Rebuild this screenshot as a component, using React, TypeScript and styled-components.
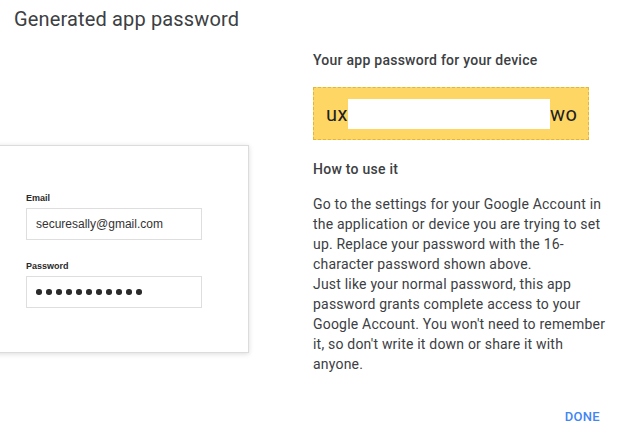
import React from "react";
import styled, { createGlobalStyle } from "styled-components";

const Global = createGlobalStyle`
  html, body { margin: 0; padding: 0; background: #fff; }
  body { font-family: Roboto, "Noto Sans", Arial, sans-serif; color: #3c4043; }
  * { box-sizing: border-box; }
`;

const Dialog = styled.div`
  width: 629px;
  height: 444px;
  display: flex;
  flex-direction: column;
  overflow: hidden;
`;

const Title = styled.h1`
  margin: 7px 0 0 14px;
  font-size: 20px;
  line-height: 24px;
  font-weight: 400;
  letter-spacing: 0.15px;
  color: #3c4043;
`;

const Body = styled.div`
  display: grid;
  grid-template-columns: 313px 300px;
  margin-top: 19px;
`;

const LeftCol = styled.div`
  padding-top: 95px;
`;

const Card = styled.div`
  margin-left: -10px;
  width: 259px;
  height: 208px;
  background: #fff;
  border: 1px solid #dcdcdc;
  box-shadow: 0 1px 5px rgba(0, 0, 0, 0.14);
  padding: 46px 0 0 35px;
  font-family: "Liberation Sans", Arial, sans-serif;
`;

const Field = styled.div<{ $gap?: number }>`
  display: flex;
  flex-direction: column;
  margin-top: ${(p) => p.$gap ?? 0}px;
`;

const Label = styled.label`
  font-size: 9px;
  line-height: 12px;
  font-weight: 700;
  color: #2a2a2a;
  margin-bottom: 4px;
`;

const Input = styled.div`
  width: 176px;
  height: 32px;
  border: 1px solid #dedede;
  display: flex;
  align-items: center;
  padding-left: 9px;
  font-size: 12px;
  color: #333;
`;

const Dots = styled.div`
  display: flex;
  gap: 4.5px;
`;

const Dot = styled.span`
  width: 5.5px;
  height: 5.5px;
  border-radius: 50%;
  background: #2b2b2b;
`;

const RightCol = styled.div`
  display: flex;
  flex-direction: column;
`;

const Heading = styled.h2<{ $mt?: number }>`
  margin: ${(p) => p.$mt ?? 0}px 0 0 0;
  font-size: 14px;
  line-height: 20px;
  font-weight: 500;
  letter-spacing: 0.25px;
  color: #3c4043;
`;

const PasswordBox = styled.div`
  margin-top: 17px;
  width: 276px;
  height: 53px;
  background: #fdd663;
  border: 1px dashed #e2b53b;
  display: flex;
  align-items: center;
  padding-left: 12px;
  font-size: 20px;
  color: #202124;
  letter-spacing: 0.5px;
`;

const Redacted = styled.span`
  display: inline-block;
  width: 202px;
  height: 30px;
  background: #fff;
`;

const Para = styled.p`
  margin: 15px 0 0 0;
  font-size: 14px;
  line-height: 20px;
  letter-spacing: 0.2px;
  color: #3c4043;
`;

const Footer = styled.div`
  display: flex;
  justify-content: flex-end;
  padding-right: 29px;
  margin-top: 33px;
`;

const Button = styled.button`
  background: none;
  border: none;
  padding: 0;
  font-family: Roboto, sans-serif;
  font-size: 13px;
  font-weight: 500;
  letter-spacing: 0.3px;
  color: #4285f4;
  line-height: 20px;
`;

export default function App() {
  return (
    <>
      <Global />
      <Dialog>
        <Title>Generated app password</Title>
        <Body>
          <LeftCol>
            <Card>
              <Field>
                <Label>Email</Label>
                <Input>securesally@gmail.com</Input>
              </Field>
              <Field $gap={20}>
                <Label>Password</Label>
                <Input>
                  <Dots>
                    {Array.from({ length: 11 }).map((_, i) => (
                      <Dot key={i} />
                    ))}
                  </Dots>
                </Input>
              </Field>
            </Card>
          </LeftCol>
          <RightCol>
            <Heading>Your app password for your device</Heading>
            <PasswordBox>
              ux<Redacted />wo
            </PasswordBox>
            <Heading $mt={19}>How to use it</Heading>
            <Para>
              Go to the settings for your Google Account in the application or
              device you are trying to set up. Replace your password with the
              16-character password shown above.
              <br />
              Just like your normal password, this app password grants complete
              access to your Google Account. You won't need to remember it, so
              don't write it down or share it with anyone.
            </Para>
          </RightCol>
        </Body>
        <Footer>
          <Button>DONE</Button>
        </Footer>
      </Dialog>
    </>
  );
}
